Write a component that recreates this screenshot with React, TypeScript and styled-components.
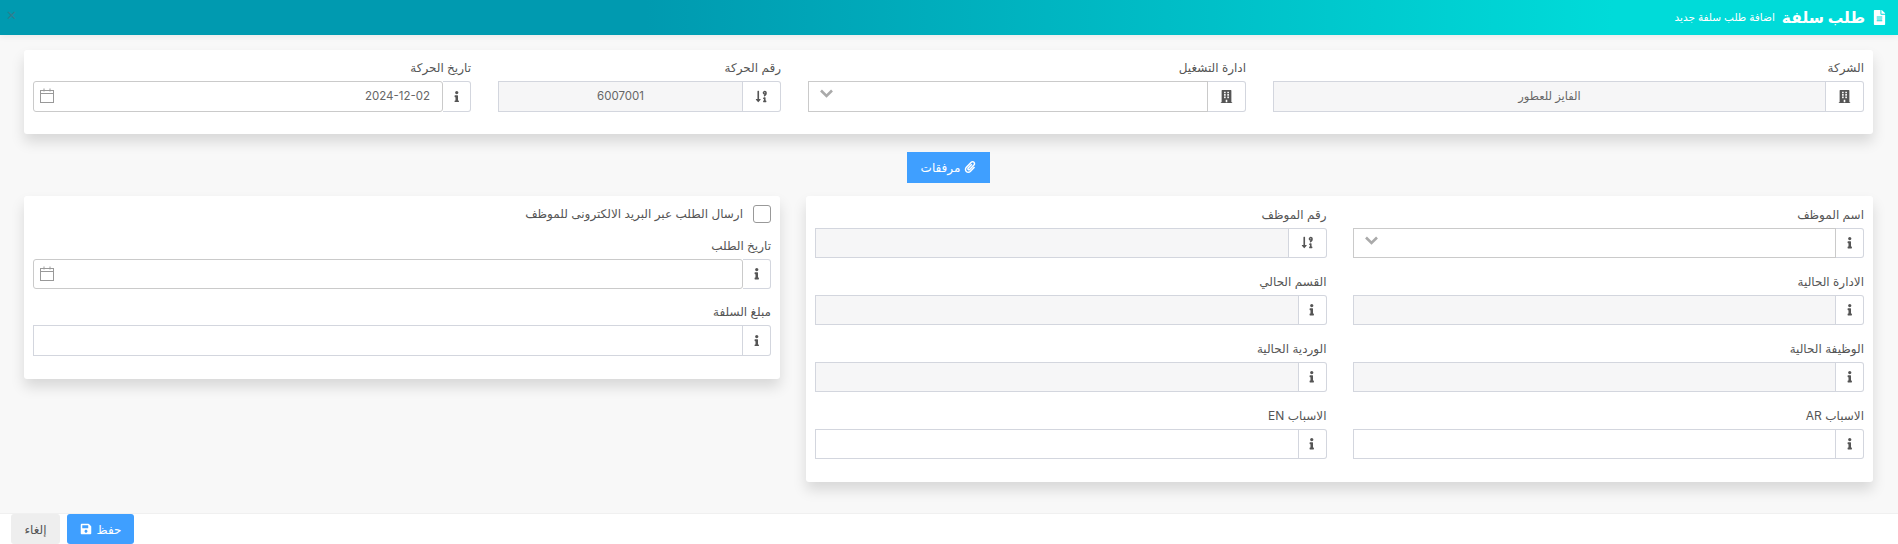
import styled, { createGlobalStyle } from "styled-components";
import { FaBuilding, FaFileAlt, FaInfo, FaPaperclip, FaSave, FaSortNumericDownAlt } from "react-icons/fa";

const GlobalStyle = createGlobalStyle`
    html, body {
        margin: 0;
        padding: 0;
        background: #f8f8f8;
    }
    * {
        box-sizing: border-box;
    }
`;

const FONT = `"Inter", "Noto Sans", "DejaVu Sans", sans-serif`;

const Page = styled.div`
    direction: rtl;
    height: 544px;
    overflow: hidden;
    display: flex;
    flex-direction: column;
    font-family: ${FONT};
    color: #555;
    position: relative;
`;

const Header = styled.header`
    height: 35px;
    flex-shrink: 0;
    display: flex;
    align-items: center;
    gap: 7px;
    padding-right: 11px;
    color: #fff;
    background: linear-gradient(to right, #009ab0 34%, #00dbd9 85%);
    box-shadow: 0 2px 6px rgba(0, 0, 0, 0.06);
`;

const HeaderIcon = styled(FaFileAlt)`
    font-size: 15px;
`;

const HeaderTitle = styled.span`
    font-size: 15.5px;
    font-weight: 700;
`;

const HeaderSub = styled.span`
    font-size: 10.5px;
`;

const CloseMark = styled.span`
    position: absolute;
    left: 6px;
    top: 8px;
    font-size: 13px;
    line-height: 14px;
    color: #2f7f8f;
`;

const Content = styled.main`
    flex: 1;
    display: flex;
    flex-direction: column;
    padding: 15px 25px 0 24px;
`;

const Card = styled.section<{ $grow?: number }>`
    flex: ${(p) => p.$grow ?? "none"};
    background: #fff;
    border-radius: 3px;
    box-shadow: 0 8px 14px rgba(0, 0, 0, 0.13);
`;

const TopGrid = styled.div`
    display: grid;
    grid-template-columns: 591fr 438fr 283fr 438fr;
    column-gap: 27px;
    padding: 10px 9px 22px;
`;

const AttachRow = styled.div`
    display: flex;
    justify-content: center;
    margin: 18px 0 13px;
`;

const AttachButton = styled.button`
    width: 83px;
    height: 31px;
    border: 0;
    background: #3f9fff;
    color: #fff;
    font-family: ${FONT};
    font-size: 12px;
    display: flex;
    align-items: center;
    justify-content: center;
    gap: 4px;
`;

const Columns = styled.div`
    display: flex;
    align-items: flex-start;
    gap: 26px;
`;

const FieldsGrid = styled.div`
    display: grid;
    grid-template-columns: 1fr 1fr;
    column-gap: 26px;
    row-gap: 15.6px;
    padding: 11px 9px 23px;
`;

const Stack = styled.div`
    display: flex;
    flex-direction: column;
    gap: 15px;
    padding: 9px 9px 23px;
`;

const CheckRow = styled.label`
    display: flex;
    align-items: center;
    gap: 10px;
    height: 18px;
    font-size: 12px;
    color: #555;
`;

const CheckBox = styled.span`
    width: 18px;
    height: 18px;
    border: 1px solid #999;
    border-radius: 3px;
    background: #fff;
`;

const Field = styled.div``;

const Label = styled.div`
    height: 17px;
    line-height: 15px;
    margin-bottom: 4px;
    font-size: 12px;
    color: #555;
`;

const Group = styled.div`
    position: relative;
    display: flex;
    height: 30.5px;
`;

const Addon = styled.span<{ $wide?: boolean }>`
    flex: none;
    width: ${(p) => (p.$wide ? "38px" : "28px")};
    display: flex;
    align-items: center;
    justify-content: center;
    background: #fff;
    border: 1px solid #d3d6de;
    border-left: 0;
    border-radius: 0 3px 3px 0;
    color: #555;
    font-size: ${(p) => (p.$wide ? "13px" : "11.5px")};
`;

const Input = styled.input<{ $rounded?: boolean; $strong?: boolean }>`
    flex: 1;
    min-width: 0;
    height: 100%;
    padding: 0 12px;
    border: 1px solid ${(p) => (p.$strong ? "#cacaca" : "#d3d6de")};
    border-radius: ${(p) => (p.$rounded ? "3px" : "0")};
    background: #fff;
    color: #666;
    font-family: ${FONT};
    font-size: 11.5px;
    outline: none;
    &:disabled {
        background: #f6f6f7;
    }
`;

const CenteredInput = styled(Input)`
    text-align: center;
`;

const OverlayIcon = styled.span`
    position: absolute;
    left: 7px;
    top: 7px;
    display: flex;
`;

const ChevronMark = styled(OverlayIcon)`
    left: 12px;
    top: 8px;
`;

const Footer = styled.footer`
    height: 31px;
    flex-shrink: 0;
    display: flex;
    justify-content: flex-end;
    gap: 7px;
    padding-left: 11px;
    background: #fff;
    border-top: 1px solid #f0f0f0;
`;

const FooterButton = styled.button<{ $primary?: boolean }>`
    height: 30px;
    width: ${(p) => (p.$primary ? "67px" : "49px")};
    border: 0;
    border-radius: 3px;
    background: ${(p) => (p.$primary ? "#3f9fff" : "#eeeeee")};
    color: ${(p) => (p.$primary ? "#fff" : "#555")};
    font-family: ${FONT};
    font-size: 12px;
    display: flex;
    align-items: center;
    justify-content: center;
    gap: 5px;
`;

function CalendarIcon() {
    return (
        <svg width="14" height="15" viewBox="0 0 14 15" fill="none" stroke="#999" strokeWidth="1">
            <rect x="0.5" y="2.5" width="13" height="12" />
            <path d="M0.5 5.5H13.5M4 0.5V3.5M10 0.5V3.5" />
        </svg>
    );
}

function ChevronIcon() {
    return (
        <svg width="13" height="9" viewBox="0 0 13 9" fill="none" stroke="#aaa" strokeWidth="2.6">
            <path d="M1 1.5L6.5 7L12 1.5" />
        </svg>
    );
}

type FieldProps = {
    label: string;
    kind?: "info" | "building" | "number";
    disabled?: boolean;
    value?: string;
    select?: boolean;
    center?: boolean;
    date?: boolean;
};

function FormField({ label, kind = "info", disabled, value, select, center, date }: FieldProps) {
    const Control = center ? CenteredInput : Input;
    return (
        <Field>
            <Label>{label}</Label>
            <Group>
                <Addon $wide={kind !== "info"}>
                    {kind === "info" && <FaInfo />}
                    {kind === "building" && <FaBuilding />}
                    {kind === "number" && <FaSortNumericDownAlt />}
                </Addon>
                <Control $rounded={date} $strong={date || select} disabled={disabled} defaultValue={value} />
                {date && (
                    <OverlayIcon>
                        <CalendarIcon />
                    </OverlayIcon>
                )}
                {select && (
                    <ChevronMark>
                        <ChevronIcon />
                    </ChevronMark>
                )}
            </Group>
        </Field>
    );
}

export default function App() {
    return (
        <>
            <GlobalStyle />
            <Page>
                <Header>
                    <HeaderIcon />
                    <HeaderTitle>طلب سلفة</HeaderTitle>
                    <HeaderSub>اضافة طلب سلفة جديد</HeaderSub>
                </Header>
                <CloseMark>✕</CloseMark>
                <Content>
                    <Card>
                        <TopGrid>
                            <FormField label="الشركة" kind="building" disabled center value="الفايز للعطور" />
                            <FormField label="ادارة التشغيل" kind="building" select />
                            <FormField label="رقم الحركة" kind="number" disabled center value="6007001" />
                            <FormField label="تاريخ الحركة" date value="2024-12-02" />
                        </TopGrid>
                    </Card>
                    <AttachRow>
                        <AttachButton>
                            <FaPaperclip />
                            مرفقات
                        </AttachButton>
                    </AttachRow>
                    <Columns>
                        <Card $grow={1067}>
                            <FieldsGrid>
                                <FormField label="اسم الموظف" select />
                                <FormField label="رقم الموظف" kind="number" disabled />
                                <FormField label="الادارة الحالية" disabled />
                                <FormField label="القسم الحالي" disabled />
                                <FormField label="الوظيفة الحالية" disabled />
                                <FormField label="الوردية الحالية" disabled />
                                <FormField label="الاسباب AR" />
                                <FormField label="الاسباب EN" />
                            </FieldsGrid>
                        </Card>
                        <Card $grow={756}>
                            <Stack>
                                <CheckRow>
                                    <CheckBox />
                                    ارسال الطلب عبر البريد الالكترونى للموظف
                                </CheckRow>
                                <FormField label="تاريخ الطلب" date />
                                <FormField label="مبلغ السلفة" />
                            </Stack>
                        </Card>
                    </Columns>
                </Content>
                <Footer>
                    <FooterButton $primary>
                        حفظ
                        <FaSave />
                    </FooterButton>
                    <FooterButton>إلغاء</FooterButton>
                </Footer>
            </Page>
        </>
    );
}
